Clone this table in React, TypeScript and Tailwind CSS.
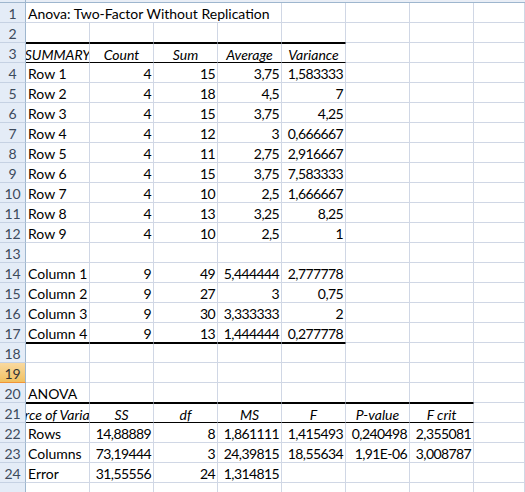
import React from 'react';

type Align = 'l' | 'r' | 'c';

type CellDef = {
  v?: string;
  a?: Align;
  i?: boolean;
  span?: number;
};

const COL_W = 64;

const num = (v: string): CellDef => ({ v, a: 'r' });
const head = (v: string): CellDef => ({ v, a: 'c', i: true });

// rows with black borders (A..E for the summary block, A..G for the anova block)
const summaryTop = [3, 18];
const summaryBottom = [2, 3, 17];
const anovaTop = [21];
const anovaBottom = [20, 21];

const ROWS: Record<number, CellDef[]> = {
  1: [{ v: 'Anova: Two-Factor Without Replication', a: 'l', span: 4 }],
  3: [head('SUMMARY'), head('Count'), head('Sum'), head('Average'), head('Variance')],
  4: [{ v: 'Row 1' }, num('4'), num('15'), num('3,75'), num('1,583333')],
  5: [{ v: 'Row 2' }, num('4'), num('18'), num('4,5'), num('7')],
  6: [{ v: 'Row 3' }, num('4'), num('15'), num('3,75'), num('4,25')],
  7: [{ v: 'Row 4' }, num('4'), num('12'), num('3'), num('0,666667')],
  8: [{ v: 'Row 5' }, num('4'), num('11'), num('2,75'), num('2,916667')],
  9: [{ v: 'Row 6' }, num('4'), num('15'), num('3,75'), num('7,583333')],
  10: [{ v: 'Row 7' }, num('4'), num('10'), num('2,5'), num('1,666667')],
  11: [{ v: 'Row 8' }, num('4'), num('13'), num('3,25'), num('8,25')],
  12: [{ v: 'Row 9' }, num('4'), num('10'), num('2,5'), num('1')],
  14: [{ v: 'Column 1' }, num('9'), num('49'), num('5,444444'), num('2,777778')],
  15: [{ v: 'Column 2' }, num('9'), num('27'), num('3'), num('0,75')],
  16: [{ v: 'Column 3' }, num('9'), num('30'), num('3,333333'), num('2')],
  17: [{ v: 'Column 4' }, num('9'), num('13'), num('1,444444'), num('0,277778')],
  20: [{ v: 'ANOVA' }],
  21: [
    head('Source of Variation'),
    head('SS'),
    head('df'),
    head('MS'),
    head('F'),
    head('P-value'),
    head('F crit'),
  ],
  22: [{ v: 'Rows' }, num('14,88889'), num('8'), num('1,861111'), num('1,415493'), num('0,240498'), num('2,355081')],
  23: [{ v: 'Columns' }, num('73,19444'), num('3'), num('24,39815'), num('18,55634'), num('1,91E-06'), num('3,008787')],
  24: [{ v: 'Error' }, num('31,55556'), num('24'), num('1,314815')],
};

const Cell: React.FC<{ c: CellDef; width?: number; last?: boolean; top?: boolean; bottom?: boolean }> = ({
  c,
  width,
  last,
  top,
  bottom,
}) => {
  const justify = c.a === 'r' ? 'justify-end' : c.a === 'c' ? 'justify-center' : 'justify-start';
  return (
    <div
      className={`flex h-full overflow-hidden whitespace-nowrap border-r border-b border-[#d0d7e5] px-[2px] leading-[21px] ${justify} ${
        last ? 'flex-1' : 'shrink-0'
      } ${top ? 'border-t border-t-black' : ''} ${bottom ? 'border-b-black' : ''}`}
      style={width ? { width } : undefined}
    >
      {c.v && (
        <span className={`shrink-0 ${c.i ? 'italic' : ''} ${c.a === 'r' ? 'tracking-[-0.6px]' : ''}`}>{c.v}</span>
      )}
    </div>
  );
};

const SheetRow: React.FC<{ n: number; selected?: boolean; label?: boolean }> = ({ n, selected, label = true }) => {
  const defs = ROWS[n] || [];
  const cells: React.ReactNode[] = [];
  let col = 0;
  let idx = 0;
  while (col < 8) {
    const d = defs[idx] || {};
    const span = d.span || 1;
    const inSummary = col < 5;
    const inAnova = col < 7;
    const top = (summaryTop.includes(n) && inSummary) || (anovaTop.includes(n) && inAnova);
    const bottom = (summaryBottom.includes(n) && inSummary) || (anovaBottom.includes(n) && inAnova);
    cells.push(
      <Cell
        key={col}
        c={d}
        width={col === 7 ? undefined : COL_W * span}
        last={col === 7}
        top={top}
        bottom={bottom}
      />
    );
    col += span;
    idx += 1;
  }

  return (
    <div className="flex h-[20px]">
      <div
        className={`flex w-[26px] shrink-0 justify-center border-r border-b border-r-[#9eb6ce] leading-[21px] ${
          selected
            ? 'bg-gradient-to-b from-[#f9d99f] to-[#f1c15f] border-b-[#f29436] text-[#333]'
            : 'bg-[#e4ecf7] border-b-[#c5d1e3] text-[#3d4a5c]'
        }`}
      >
        {label ? n : null}
      </div>
      {cells}
    </div>
  );
};

export default function App() {
  const rows = Array.from({ length: 25 }, (_, i) => i + 1);
  return (
    <div
      className="h-[492px] w-[525px] overflow-hidden bg-white text-[14px] text-black"
      style={{ fontFamily: 'Lato, "Open Sans", sans-serif' }}
    >
      <div className="flex h-[3px]">
        <div className="w-[26px] shrink-0 border-r border-b border-[#9eb6ce] bg-[#e4ecf7]" />
        <div className="flex-1 border-b border-[#9eb6ce] bg-[#e9eef6]" />
      </div>
      {rows.map((n) => (
        <SheetRow key={n} n={n} selected={n === 19} label={n < 25} />
      ))}
    </div>
  );
}
